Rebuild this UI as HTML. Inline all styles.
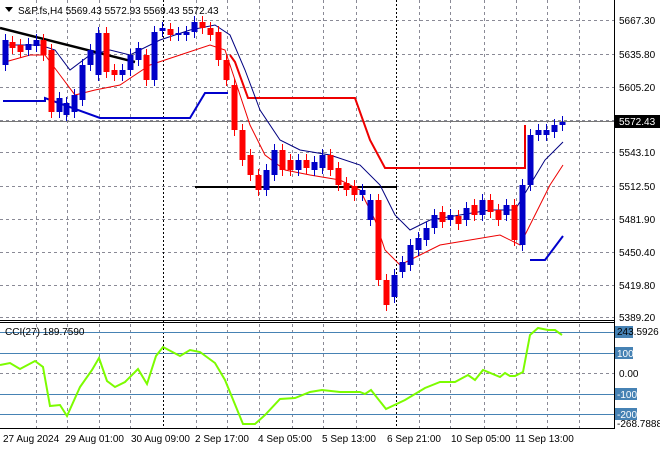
<!DOCTYPE html><html><head><style>
body{margin:0;background:#fff;width:660px;height:450px;overflow:hidden;font-family:"Liberation Sans",sans-serif}
svg text{font-family:"Liberation Sans",sans-serif;font-size:10px;fill:#000}
</style></head><body>
<svg width="660" height="450" xmlns="http://www.w3.org/2000/svg">
<g stroke="#8a8a96" stroke-dasharray="3,3" stroke-width="1">
<line x1="0" y1="20.5" x2="614" y2="20.5"/><line x1="0" y1="54.5" x2="614" y2="54.5"/><line x1="0" y1="87.5" x2="614" y2="87.5"/><line x1="0" y1="120.5" x2="614" y2="120.5"/><line x1="0" y1="152.5" x2="614" y2="152.5"/><line x1="0" y1="186.5" x2="614" y2="186.5"/><line x1="0" y1="219.5" x2="614" y2="219.5"/><line x1="0" y1="252.5" x2="614" y2="252.5"/><line x1="0" y1="285.5" x2="614" y2="285.5"/><line x1="0" y1="317.5" x2="614" y2="317.5"/>
<line x1="0" y1="373.5" x2="614" y2="373.5"/>
<line x1="36.5" y1="0" x2="36.5" y2="428"/><line x1="67.5" y1="0" x2="67.5" y2="428"/><line x1="99.5" y1="0" x2="99.5" y2="428"/><line x1="130.5" y1="0" x2="130.5" y2="428"/><line x1="196.5" y1="0" x2="196.5" y2="428"/><line x1="227.5" y1="0" x2="227.5" y2="428"/><line x1="259.5" y1="0" x2="259.5" y2="428"/><line x1="292.5" y1="0" x2="292.5" y2="428"/><line x1="323.5" y1="0" x2="323.5" y2="428"/><line x1="356.5" y1="0" x2="356.5" y2="428"/><line x1="419.5" y1="0" x2="419.5" y2="428"/><line x1="450.5" y1="0" x2="450.5" y2="428"/><line x1="484.5" y1="0" x2="484.5" y2="428"/><line x1="516.5" y1="0" x2="516.5" y2="428"/><line x1="547.5" y1="0" x2="547.5" y2="428"/><line x1="579.5" y1="0" x2="579.5" y2="428"/>
</g>
<g stroke="#000" stroke-dasharray="2,2"><line x1="163.5" y1="0" x2="163.5" y2="428"/><line x1="396.5" y1="0" x2="396.5" y2="428"/></g>
<line x1="0" y1="121.5" x2="614" y2="121.5" stroke="#777" stroke-width="1"/>
<polyline fill="none" stroke="#000" stroke-width="2.5" points="0,28 135,62"/>
<line x1="195" y1="187" x2="397" y2="187" stroke="#000" stroke-width="2"/>
<polyline fill="none" stroke="#e00" stroke-width="2" points="230,55 235,62 248,98 355,98 370,140 385,168 525,168 525,125"/>
<polyline fill="none" stroke="#00c" stroke-width="2" points="3,101 45,101 45,98 100,118 190,118 205,93 228,93"/>
<polyline fill="none" stroke="#00c" stroke-width="2" points="530,260 545,260 563,236"/>
<polyline fill="none" stroke="#000080" stroke-width="1" points="5,45 40,45 55,50 70,70 90,55 110,50 130,55 160,40 190,30 215,25 230,35 245,70 260,110 280,140 300,150 330,155 360,165 380,185 395,215 410,230 430,220 460,215 490,210 515,210 530,185 545,160 563,142"/>
<polyline fill="none" stroke="#e00" stroke-width="1" points="5,62 30,55 45,55 60,75 75,95 95,90 120,85 150,65 180,55 210,45 225,50 235,80 250,125 265,155 285,170 310,175 340,180 360,190 375,220 385,250 400,265 420,255 440,245 470,240 500,235 520,245 535,215 550,185 563,165"/>
<g id="c"></g>
<line x1="0" y1="320.5" x2="614" y2="320.5" stroke="#000"/>
<line x1="0" y1="322.5" x2="614" y2="322.5" stroke="#000"/>
<line x1="614.5" y1="0" x2="614.5" y2="429" stroke="#000"/>
<line x1="0" y1="428.5" x2="615" y2="428.5" stroke="#000"/>
<g stroke="#4682b4"><line x1="0" y1="332.5" x2="614" y2="332.5"/><line x1="0" y1="353.5" x2="614" y2="353.5"/><line x1="0" y1="394.5" x2="614" y2="394.5"/><line x1="0" y1="414.5" x2="614" y2="414.5"/></g>
<polyline fill="none" stroke="#7cfc00" stroke-width="2" points="0,365 10,363 20,369 35,361 43,367 50,406 60,405 67,416 80,387 92,370 99,358 107,381 115,387 125,382 138,369 147,384 156,356 163,347 180,356 190,350 200,352 215,363 225,380 243,424 255,424 265,415 280,399 295,398 310,392 322,390 340,392 360,392 365,394 371,390 386,409 405,400 425,388 440,382 455,382 468,375 475,380 483,370 500,377 505,373 510,376 515,376 523,372 530,335 538,328 548,330 555,330 562,335"/>
<text x="5" y="335" font-size="10">CCI(27) 189.7590</text>
<path d="M5 7h8l-4 5z" fill="#000"/>
<text x="18" y="14">S&amp;P.fs,H4  5569.43 5572.93 5569.43 5572.43</text>
<g>
<text x="619" y="24">5667.30</text><text x="619" y="58">5635.80</text><text x="619" y="91">5605.20</text><text x="619" y="156">5543.10</text><text x="619" y="190">5512.50</text><text x="619" y="223">5481.90</text><text x="619" y="256">5450.40</text><text x="619" y="289">5419.80</text><text x="619" y="321">5389.20</text>
</g>
<rect x="615" y="115" width="45" height="13" fill="#000"/><text x="619" y="125" style="fill:#fff">5572.43</text>
<rect x="615" y="326" width="18" height="12" fill="#4682b4"/><rect x="615" y="347" width="18" height="12" fill="#4682b4"/><rect x="615" y="388" width="22" height="12" fill="#4682b4"/><rect x="615" y="408" width="22" height="12" fill="#4682b4"/>
<text x="617" y="335">243.5926</text><text x="617" y="357" style="fill:#fff">100</text><text x="619" y="377">0.00</text><text x="617" y="398" style="fill:#fff">-100</text><text x="617" y="418" style="fill:#fff">-200</text><text x="617" y="427">-268.7888</text>
<g><text x="3" y="442">27 Aug 2024</text><text x="65" y="442">29 Aug 01:00</text><text x="131" y="442">30 Aug 09:00</text><text x="195" y="442">2 Sep 17:00</text><text x="258" y="442">4 Sep 05:00</text><text x="322" y="442">5 Sep 13:00</text><text x="387" y="442">6 Sep 21:00</text><text x="451" y="442">10 Sep 05:00</text><text x="515" y="442">11 Sep 13:00</text></g>
</svg>
<script>
var d=[[5,40,65,1],[12,42,48,0],[20,45,52,0],[28,44,50,1],[36,40,46,1],[43,40,55,0],[51,50,112,0],[59,98,112,1],[66,103,115,1],[74,95,112,1],[82,65,100,1],[90,50,65,1],[98,33,75,1],[106,33,72,0],[114,70,75,0],[122,70,75,1],[130,55,70,1],[138,48,60,1],[146,55,80,0],[154,32,80,1],[162,28,31,1],[170,29,35,0],[178,33,35,1],[186,32,35,1],[194,22,32,1],[202,22,28,0],[210,28,35,0],[218,32,60,0],[226,60,80,0],[234,85,130,0],[242,130,160,0],[250,155,175,0],[258,175,190,0],[266,170,190,1],[274,150,175,1],[282,150,170,0],[290,160,170,0],[298,160,170,1],[306,160,168,0],[314,162,170,1],[322,155,168,1],[330,155,170,0],[338,168,185,0],[346,183,190,0],[354,186,195,0],[362,190,195,1],[370,200,220,1],[378,200,280,0],[386,280,305,0],[394,275,297,1],[402,262,272,1],[410,245,265,1],[418,238,250,1],[426,228,240,1],[434,215,228,1],[442,212,222,0],[450,215,220,1],[458,216,224,0],[466,208,220,1],[474,205,215,0],[482,200,215,1],[490,200,212,0],[498,210,220,0],[506,205,215,1],[514,205,240,0],[522,185,245,1],[530,135,185,1],[538,130,135,1],[546,130,135,1],[554,125,132,1],[562,122,125,1]];
var s='';d.forEach(function(c){var col=c[3]?'#0000c8':'#f00';s+='<line x1="'+(c[0]+.5)+'" y1="'+(c[1]-6)+'" x2="'+(c[0]+.5)+'" y2="'+(c[2]+6)+'" stroke="'+col+'"/><rect x="'+(c[0]-2.5)+'" y="'+c[1]+'" width="6" height="'+Math.max(2,c[2]-c[1])+'" fill="'+col+'"/>';});
document.getElementById('c').innerHTML=s;
</script>
</body></html>
